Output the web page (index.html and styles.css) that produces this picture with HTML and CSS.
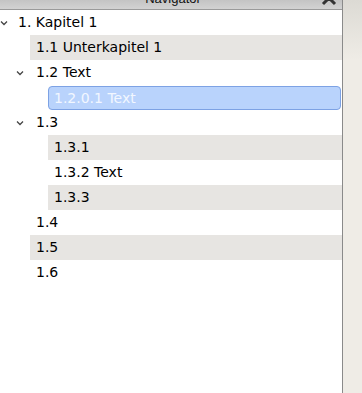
FILE: index.html
```html
<!DOCTYPE html>
<html>
<head>
<meta charset="utf-8">
<link rel="stylesheet" href="styles.css">
</head>
<body>
<div class="panel">
  <div class="header">
    <span class="title">Navigator</span>
    <svg class="close" width="16" height="16" viewBox="0 0 16 16"><path d="M2 2 L14 14 M14 2 L2 14" stroke="#333" stroke-width="3" fill="none"/></svg>
  </div>
  <div class="tree">
    <div class="row l1"><svg class="chev c1" width="8" height="6" viewBox="0 0 8 6"><path d="M1 1.5 L4 4.5 L7 1.5" stroke="#444" stroke-width="1.3" fill="none"/></svg><span class="label">1. Kapitel 1</span></div>
    <div class="row l2"><span class="label alt">1.1 Unterkapitel 1</span></div>
    <div class="row l2 open"><svg class="chev c2" width="8" height="6" viewBox="0 0 8 6"><path d="M1 1.5 L4 4.5 L7 1.5" stroke="#444" stroke-width="1.3" fill="none"/></svg><span class="label">1.2 Text</span></div>
    <div class="row l3"><span class="label sel">1.2.0.1 Text</span></div>
    <div class="row l2 open"><svg class="chev c2" width="8" height="6" viewBox="0 0 8 6"><path d="M1 1.5 L4 4.5 L7 1.5" stroke="#444" stroke-width="1.3" fill="none"/></svg><span class="label">1.3</span></div>
    <div class="row l3"><span class="label alt">1.3.1</span></div>
    <div class="row l3"><span class="label">1.3.2 Text</span></div>
    <div class="row l3"><span class="label alt">1.3.3</span></div>
    <div class="row l2"><span class="label">1.4</span></div>
    <div class="row l2"><span class="label alt">1.5</span></div>
    <div class="row l2"><span class="label">1.6</span></div>
  </div>
</div>
<div class="strip"></div>
</body>
</html>
```
FILE: styles.css
```css
html, body {
  margin: 0;
  padding: 0;
  background: #fff;
}
body {
  width: 362px;
  height: 393px;
  display: flex;
  overflow: hidden;
  font-family: "DejaVu Sans", "Liberation Sans", sans-serif;
  font-size: 14px;
  color: #000;
}
.panel {
  width: 342px;
  border-right: 1px solid #8a8a8a;
  display: flex;
  flex-direction: column;
  background: #fff;
}
.strip {
  flex: 1;
  background: linear-gradient(#dcdad4, #efece6 60px, #efece6);
}
.header {
  height: 9px;
  border-bottom: 1px solid #9a9a9a;
  background: linear-gradient(#c4c4c4, #d2d2d2);
  display: flex;
  align-items: flex-end;
  justify-content: center;
  overflow: hidden;
  position: relative;
}
.title {
  font-family: "Liberation Sans", sans-serif;
  font-size: 13px;
  line-height: 13px;
  margin-bottom: 4px;
  margin-left: 4px;
  color: #111;
}
.close {
  position: absolute;
  right: 5px;
  bottom: 3px;
}
.tree {
  display: flex;
  flex-direction: column;
}
.row {
  height: 25px;
  display: flex;
  align-items: stretch;
}
.chev {
  align-self: center;
  flex: none;
}
.c1 { margin-left: 0px; margin-right: 10px; }
.c2 { margin-left: 16px; margin-right: 6px; }
.l1 { padding-left: 0; }
.l2 .label { margin-left: 30px; }
.l2.open .label { margin-left: 0; }
.l3 .label { margin-left: 48px; }
.label {
  flex: 1;
  display: flex;
  align-items: center;
  padding-left: 6px;
  line-height: 25px;
  white-space: nowrap;
}
.l1 .label { padding-left: 0; }
.alt {
  background: #e7e5e2;
}
.sel {
  background: #b9d3fc;
  border: 1px solid #7da2e4;
  border-radius: 4px;
  color: #f2f7ff;
  margin-right: 1px;
  margin-top: 1px;
  margin-bottom: 0;
  padding-left: 5px;
}
```
